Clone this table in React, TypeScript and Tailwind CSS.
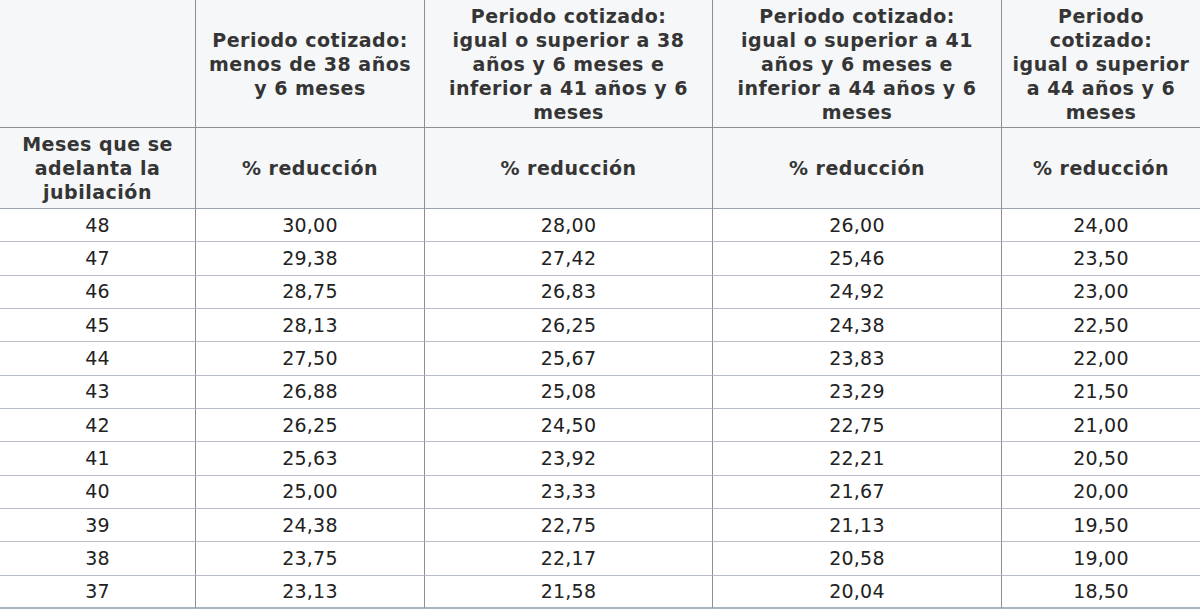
import React from "react";

const head1: string[][] = [
  [],
  ["Periodo cotizado:", "menos de 38 años", "y 6 meses"],
  ["Periodo cotizado:", "igual o superior a 38", "años y 6 meses e", "inferior a 41 años y 6", "meses"],
  ["Periodo cotizado:", "igual o superior a 41", "años y 6 meses e", "inferior a 44 años y 6", "meses"],
  ["Periodo", "cotizado:", "igual o superior", "a 44 años y 6", "meses"],
];

const rows: string[][] = [
  ["48", "30,00", "28,00", "26,00", "24,00"],
  ["47", "29,38", "27,42", "25,46", "23,50"],
  ["46", "28,75", "26,83", "24,92", "23,00"],
  ["45", "28,13", "26,25", "24,38", "22,50"],
  ["44", "27,50", "25,67", "23,83", "22,00"],
  ["43", "26,88", "25,08", "23,29", "21,50"],
  ["42", "26,25", "24,50", "22,75", "21,00"],
  ["41", "25,63", "23,92", "22,21", "20,50"],
  ["40", "25,00", "23,33", "21,67", "20,00"],
  ["39", "24,38", "22,75", "21,13", "19,50"],
  ["38", "23,75", "22,17", "20,58", "19,00"],
  ["37", "23,13", "21,58", "20,04", "18,50"],
];

export default function App() {
  return (
    <div
      className="w-[1200px] h-[609px] overflow-hidden bg-white"
      style={{ fontFamily: '"DejaVu Sans", Verdana, sans-serif' }}
    >
      <div className="grid grid-cols-[196px_229px_288px_289px_198px] grid-rows-[128px_81px_repeat(12,33.33px)]">
        {head1.map((lines, i) => (
          <div
            key={"h1" + i}
            className={`flex flex-col items-center justify-center bg-[#f6f7f8] border-b border-[#8f8f8f] text-[19px] leading-[24px] tracking-[0.5px] font-bold text-[#353535] text-center ${i < 4 ? "border-r" : ""}`}
          >
            {lines.map((l, j) => (
              <span key={j} className="block whitespace-nowrap">
                {l}
              </span>
            ))}
          </div>
        ))}
        {[["Meses que se", "adelanta la", "jubilación"], ["% reducción"], ["% reducción"], ["% reducción"], ["% reducción"]].map(
          (lines, i) => (
            <div
              key={"h2" + i}
              className={`flex flex-col items-center justify-center bg-[#f6f7f8] border-b border-b-[#9aa3ae] border-r-[#8f8f8f] text-[19px] leading-[24px] tracking-[0.5px] font-bold text-[#353535] text-center ${i < 4 ? "border-r" : ""}`}
            >
              {lines.map((l, j) => (
                <span key={j} className="block whitespace-nowrap">
                  {l}
                </span>
              ))}
            </div>
          )
        )}
        {rows.map((r, ri) =>
          r.map((c, ci) => (
            <div
              key={ri + "-" + ci}
              className={`flex items-center justify-center text-[19px] leading-none tracking-[0.2px] text-[#222222] border-r-[#8f8f8f] ${ci < 4 ? "border-r" : ""} ${ri === rows.length - 1 ? "border-b-2 border-b-[#a9b3c2]" : "border-b border-b-[#b7bec8]"}`}
            >
              {c}
            </div>
          ))
        )}
      </div>
    </div>
  );
}
